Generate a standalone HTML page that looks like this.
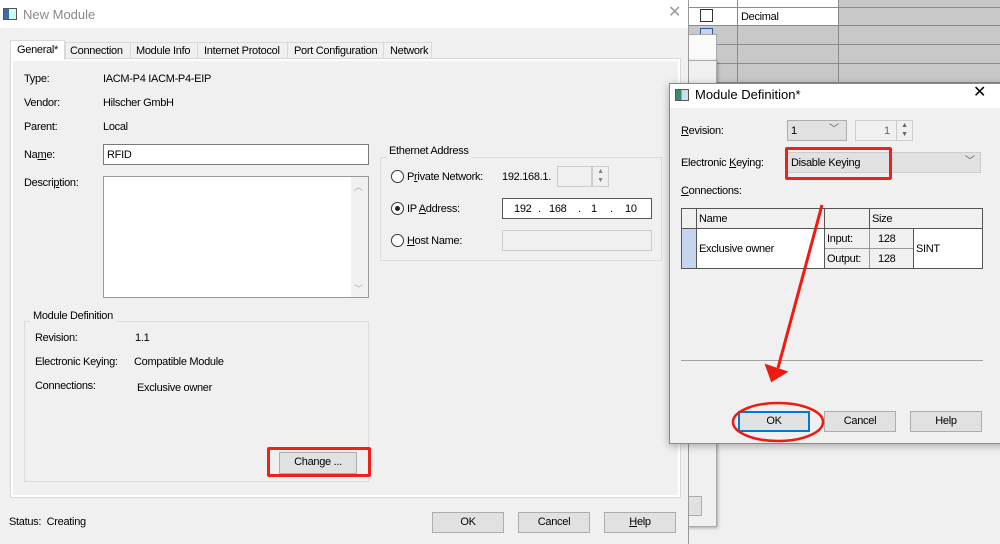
<!DOCTYPE html>
<html><head><meta charset="utf-8"><style>
*{box-sizing:border-box}
body{margin:0;width:1000px;height:544px;overflow:hidden;position:relative;background:#c8c8c8;font-family:"Liberation Sans",sans-serif;font-size:11px;letter-spacing:-0.3px;color:#000}
.a{position:absolute}
.t{position:absolute;white-space:nowrap;line-height:14px}
.btn{position:absolute;background:#e1e1e1;border:1px solid #adadad;text-align:center;line-height:19px}
.inp{position:absolute;background:#fff;border:1px solid #7a7a7a}
.grp{position:absolute;border:1px solid #dcdcdc}
.rad{position:absolute;width:13px;height:13px;border:1px solid #333;border-radius:50%;background:#fff}
u{text-decoration:underline}
</style></head><body>
<!-- background grid -->
<div class="a" style="left:688px;top:0;width:150px;height:25px;background:#fff"></div>
<div class="a" style="left:737px;top:0;width:1px;height:90px;background:#8a8a8a"></div>
<div class="a" style="left:838px;top:0;width:1px;height:90px;background:#8a8a8a"></div>
<div class="a" style="left:688px;top:7px;width:312px;height:1px;background:#8a8a8a"></div>
<div class="a" style="left:688px;top:25px;width:312px;height:1px;background:#8a8a8a"></div>
<div class="a" style="left:688px;top:44px;width:312px;height:1px;background:#8a8a8a"></div>
<div class="a" style="left:688px;top:63px;width:312px;height:1px;background:#8a8a8a"></div>
<div class="a" style="left:688px;top:82px;width:312px;height:1px;background:#8a8a8a"></div>
<div class="a" style="left:700px;top:9px;width:13px;height:13px;border:1px solid #333;background:#fff"></div>
<div class="a" style="left:700px;top:28px;width:13px;height:6px;border:1px solid #2a5a9a;border-bottom:none;background:#c5d5ee"></div>
<div class="t" style="left:741px;top:10px">Decimal</div>
<div class="a" style="left:688px;top:444px;width:312px;height:100px;background:#f0f0f0"></div>
<!-- back window -->
<div class="a" style="left:680px;top:34px;width:37px;height:28px;background:#fafafa;border:1px solid #aaa"></div>
<div class="a" style="left:680px;top:60px;width:37px;height:467px;background:#f0f0f0;border:1px solid #aaa;box-shadow:1px 1px 3px rgba(0,0,0,.3)"></div>
<div class="a" style="left:688px;top:496px;width:14px;height:20px;background:#e1e1e1;border:1px solid #adadad"></div>

<!-- main dialog -->
<div class="a" style="left:0;top:0;width:689px;height:544px;background:#f0f0f0;border-right:1px solid #999"></div>
<div class="a" style="left:0;top:0;width:688px;height:28px;background:#fff"></div>
<div class="a" style="left:3px;top:8px;width:14px;height:12px;border:1px solid #555;background:linear-gradient(90deg,#3a6ea5 40%,#cfe 40%)"></div>
<div class="t" style="left:23px;top:8px;font-size:13px;color:#888;letter-spacing:0">New Module</div>
<div class="t" style="left:668px;top:6px;font-size:16px;color:#999">✕</div>

<!-- tabs -->
<div class="a" style="left:10px;top:58px;width:671px;height:440px;background:#fff;border:1px solid #d9d9d9"></div>
<div class="a" style="left:13px;top:61px;width:665px;height:434px;background:#f0f0f0"></div>
<div class="a" style="left:65px;top:42px;width:367px;height:17px;background:#f0f0f0;border:1px solid #d9d9d9"></div>
<div class="a" style="left:10px;top:40px;width:55px;height:20px;background:#fff;border:1px solid #d9d9d9;border-bottom:none"></div>
<div class="t" style="left:17px;top:43px">General*</div>
<div class="t" style="left:70px;top:44px">Connection</div>
<div class="a" style="left:130px;top:42px;width:1px;height:17px;background:#d9d9d9"></div>
<div class="t" style="left:136px;top:44px">Module Info</div>
<div class="a" style="left:197px;top:42px;width:1px;height:17px;background:#d9d9d9"></div>
<div class="t" style="left:204px;top:44px">Internet Protocol</div>
<div class="a" style="left:287px;top:42px;width:1px;height:17px;background:#d9d9d9"></div>
<div class="t" style="left:294px;top:44px">Port Configuration</div>
<div class="a" style="left:383px;top:42px;width:1px;height:17px;background:#d9d9d9"></div>
<div class="t" style="left:390px;top:44px">Network</div>

<div class="t" style="left:24px;top:72px">Type:</div>
<div class="t" style="left:103px;top:72px">IACM-P4 IACM-P4-EIP</div>
<div class="t" style="left:24px;top:96px">Vendor:</div>
<div class="t" style="left:103px;top:96px">Hilscher GmbH</div>
<div class="t" style="left:24px;top:120px">Parent:</div>
<div class="t" style="left:103px;top:120px">Local</div>
<div class="t" style="left:24px;top:148px">Na<u>m</u>e:</div>
<div class="inp" style="left:103px;top:144px;width:266px;height:21px"></div>
<div class="t" style="left:107px;top:148px">RFID</div>
<div class="t" style="left:24px;top:176px">Descri<u>p</u>tion:</div>
<div class="inp" style="left:103px;top:176px;width:266px;height:122px;border-color:#999"></div>
<div class="a" style="left:351px;top:177px;width:17px;height:120px;background:#f0f0f0"></div>
<div class="t" style="left:354px;top:180px;font-size:9px;color:#aaa">︿</div>
<div class="t" style="left:354px;top:282px;font-size:9px;color:#aaa">﹀</div>

<div class="grp" style="left:24px;top:321px;width:345px;height:161px"></div>
<div class="t" style="left:30px;top:309px;background:#f0f0f0;padding:0 3px">Module Definition</div>
<div class="t" style="left:35px;top:331px">Revision:</div>
<div class="t" style="left:135px;top:331px">1.1</div>
<div class="t" style="left:35px;top:355px">Electronic Keying:</div>
<div class="t" style="left:134px;top:355px">Compatible Module</div>
<div class="t" style="left:35px;top:379px">Connections:</div>
<div class="t" style="left:137px;top:381px">Exclusive owner</div>
<div class="btn" style="left:279px;top:452px;width:78px;height:22px">Change ...</div>
<div class="a" style="left:267px;top:447px;width:104px;height:30px;border:3px solid #f0201c;border-radius:2px"></div>

<div class="grp" style="left:380px;top:157px;width:282px;height:104px"></div>
<div class="t" style="left:387px;top:144px;background:#f0f0f0;padding:0 2px">Ethernet Address</div>
<div class="rad" style="left:391px;top:170px"></div>
<div class="t" style="left:407px;top:170px">P<u>r</u>ivate Network:</div>
<div class="t" style="left:502px;top:170px">192.168.1.</div>
<div class="a" style="left:557px;top:166px;width:35px;height:21px;border:1px solid #ccc;background:#f0f0f0"></div>
<div class="a" style="left:592px;top:166px;width:17px;height:21px;border:1px solid #ccc;background:#f0f0f0;font-size:7px;color:#888;text-align:center;line-height:9px">▲<br>▼</div>
<div class="rad" style="left:391px;top:202px"></div>
<div class="a" style="left:395px;top:206px;width:5px;height:5px;border-radius:50%;background:#222"></div>
<div class="t" style="left:407px;top:202px">IP <u>A</u>ddress:</div>
<div class="inp" style="left:502px;top:198px;width:150px;height:21px;border-color:#555"></div>
<div class="t" style="left:514px;top:202px">192</div><div class="t" style="left:538px;top:202px">.</div>
<div class="t" style="left:549px;top:202px">168</div><div class="t" style="left:578px;top:202px">.</div>
<div class="t" style="left:591px;top:202px">1</div><div class="t" style="left:610px;top:202px">.</div>
<div class="t" style="left:625px;top:202px">10</div>
<div class="rad" style="left:391px;top:234px"></div>
<div class="t" style="left:407px;top:234px"><u>H</u>ost Name:</div>
<div class="a" style="left:502px;top:230px;width:150px;height:21px;border:1px solid #ccc;background:#f0f0f0"></div>

<div class="t" style="left:9px;top:515px">Status:&nbsp; Creating</div>
<div class="btn" style="left:432px;top:512px;width:72px;height:21px">OK</div>
<div class="btn" style="left:518px;top:512px;width:72px;height:21px">Cancel</div>
<div class="btn" style="left:604px;top:512px;width:72px;height:21px"><u>H</u>elp</div>

<!-- Module Definition dialog -->
<div class="a" style="left:669px;top:83px;width:337px;height:361px;background:#f0f0f0;border:1px solid #888;box-shadow:0 2px 8px rgba(0,0,0,.3)"></div>
<div class="a" style="left:670px;top:84px;width:330px;height:24px;background:#fff"></div>
<div class="a" style="left:675px;top:89px;width:14px;height:12px;border:1px solid #555;background:linear-gradient(90deg,#3a8a6a 45%,#cde 45%)"></div>
<div class="t" style="left:695px;top:88px;font-size:13px;letter-spacing:0">Module Definition*</div>
<div class="t" style="left:973px;top:86px;font-size:16px">✕</div>
<div class="t" style="left:681px;top:124px"><u>R</u>evision:</div>
<div class="a" style="left:787px;top:120px;width:60px;height:21px;border:1px solid #adadad;background:#e1e1e1"></div>
<div class="t" style="left:791px;top:124px">1</div>
<div class="t" style="left:829px;top:123px;font-size:10px;color:#555">﹀</div>
<div class="a" style="left:855px;top:120px;width:42px;height:21px;border:1px solid #ccc;background:#f0f0f0"></div>
<div class="t" style="left:884px;top:124px;color:#666">1</div>
<div class="a" style="left:896px;top:120px;width:17px;height:21px;border:1px solid #ccc;background:#f0f0f0;font-size:7px;color:#666;text-align:center;line-height:9px">▲<br>▼</div>
<div class="t" style="left:681px;top:156px">Electronic <u>K</u>eying:</div>
<div class="a" style="left:787px;top:152px;width:194px;height:21px;border:1px solid #ccc;background:#e1e1e1"></div>
<div class="t" style="left:791px;top:156px">Disable Keying</div>
<div class="t" style="left:965px;top:155px;font-size:10px;color:#555">﹀</div>
<div class="a" style="left:785px;top:147px;width:107px;height:33px;border:3px solid #f0201c;border-radius:2px"></div>
<div class="t" style="left:681px;top:184px"><u>C</u>onnections:</div>
<div class="a" style="left:681px;top:208px;width:302px;height:61px;background:#fff;border:1px solid #555"></div>
<div class="a" style="left:682px;top:209px;width:300px;height:20px;background:#f0f0f0;border-bottom:1px solid #555"></div>
<div class="a" style="left:682px;top:229px;width:14px;height:39px;background:#c5d5ee"></div>
<div class="a" style="left:696px;top:209px;width:1px;height:59px;background:#555"></div>
<div class="a" style="left:824px;top:209px;width:1px;height:59px;background:#555"></div>
<div class="a" style="left:869px;top:209px;width:1px;height:59px;background:#555"></div>
<div class="a" style="left:825px;top:229px;width:88px;height:39px;background:#f0f0f0"></div>
<div class="a" style="left:869px;top:229px;width:1px;height:39px;background:#999"></div>
<div class="a" style="left:913px;top:229px;width:1px;height:39px;background:#555"></div>
<div class="a" style="left:825px;top:248px;width:88px;height:1px;background:#999"></div>
<div class="t" style="left:699px;top:212px">Name</div>
<div class="t" style="left:872px;top:212px">Size</div>
<div class="t" style="left:699px;top:242px">Exclusive owner</div>
<div class="t" style="left:827px;top:232px">Input:</div>
<div class="t" style="left:827px;top:252px">Output:</div>
<div class="t" style="left:878px;top:232px">128</div>
<div class="t" style="left:878px;top:252px">128</div>
<div class="t" style="left:916px;top:242px">SINT</div>
<div class="a" style="left:681px;top:360px;width:302px;height:1px;background:#a0a0a0"></div>
<div class="btn" style="left:738px;top:411px;width:72px;height:21px;border:2px solid #0078d7;line-height:17px">OK</div>
<div class="btn" style="left:824px;top:411px;width:72px;height:21px">Cancel</div>
<div class="btn" style="left:910px;top:411px;width:72px;height:21px">Help</div>
<svg class="a" style="left:0;top:0" width="1000" height="544">
<line x1="822" y1="205" x2="778" y2="368" stroke="#f01a10" stroke-width="3"/>
<polygon points="767,366 772,380 785,372" fill="#f01a10" stroke="#f01a10" stroke-width="3"/>
<ellipse cx="778" cy="422" rx="45" ry="19" fill="none" stroke="#f01a10" stroke-width="2.5"/>
</svg>
</body></html>
